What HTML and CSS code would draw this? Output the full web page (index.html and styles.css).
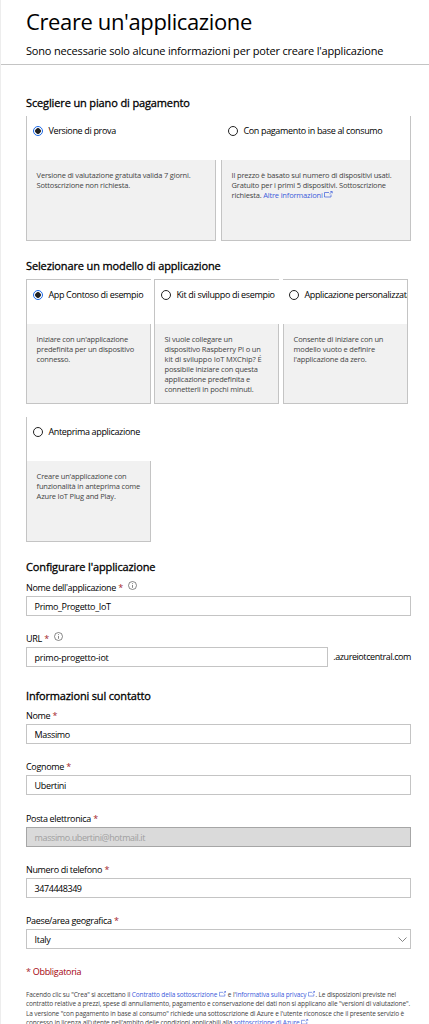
FILE: index.html
```html
<!DOCTYPE html>
<html lang="it">
<head>
<meta charset="utf-8">
<title>Creare un'applicazione</title>
<link rel="stylesheet" href="styles.css">
</head>
<body>
<svg width="0" height="0" class="defs">
  <symbol id="ext" viewBox="0 0 9 7"><path d="M5 1.5H.5v4.500h6.500V3.500M5.500 2.800 8 .8M6.300 .5h2v1.800" /></symbol>
  <symbol id="info" viewBox="0 0 9 9"><circle cx="4.5" cy="4.5" r="4" /><path d="M4.5 4v2.8M4.5 2.2v.9" /></symbol>
</svg>
<div class="page">
  <header class="header">
    <h1>Creare un'applicazione</h1>
    <p>Sono necessarie solo alcune informazioni per poter creare l'applicazione</p>
  </header>
  <main class="main">
    <h2 class="h-plan">Scegliere un piano di pagamento</h2>
    <div class="cards plans">
      <div class="card">
        <div class="head edge-l"><span class="radio on"></span>Versione di prova</div>
        <div class="body">Versione di valutazione gratuita valida 7 giorni.<br>Sottoscrizione non richiesta.</div>
      </div>
      <div class="card">
        <div class="head edge-r"><span class="radio"></span>Con pagamento in base al consumo</div>
        <div class="body">Il prezzo è basato sul numero di dispositivi usati.<br>Gratuito per i primi 5 dispositivi. Sottoscrizione<br>richiesta. <a>Altre informazioni<svg class="ext"><use href="#ext"/></svg></a></div>
      </div>
    </div>

    <h2 class="h-model">Selezionare un modello di applicazione</h2>
    <div class="cards models">
      <div class="card">
        <div class="head edge-t edge-l"><span class="radio on"></span>App Contoso di esempio</div>
        <div class="body">Iniziare con un'applicazione<br>predefinita per un dispositivo<br>connesso.</div>
      </div>
      <div class="card">
        <div class="head edge-t edge-l"><span class="radio"></span>Kit di sviluppo di esempio</div>
        <div class="body">Si vuole collegare un<br>dispositivo Raspberry PI o un<br><span class="wide">kit di sviluppo IoT MXChip? É</span><br>possibile iniziare con questa<br>applicazione predefinita e<br>connetterli in pochi minuti.</div>
      </div>
      <div class="card">
        <div class="head edge-t edge-r"><span class="radio"></span>Applicazione personalizzata</div>
        <div class="body">Consente di iniziare con un<br>modello vuoto e definire<br>l'applicazione da zero.</div>
      </div>
      <div class="card">
        <div class="head edge-l"><span class="radio"></span>Anteprima applicazione</div>
        <div class="body">Creare un'applicazione con<br>funzionalità in anteprima come<br>Azure IoT Plug and Play.</div>
      </div>
    </div>

    <h2 class="h-config">Configurare l'applicazione</h2>
    <div class="field">
      <div class="label">Nome dell'applicazione <i>*</i><svg class="info"><use href="#info"/></svg></div>
      <div class="input">Primo_Progetto_IoT</div>
    </div>
    <div class="field">
      <div class="label">URL <i>*</i><svg class="info"><use href="#info"/></svg></div>
      <div class="url"><div class="input dash">primo-progetto-iot</div><span>.azureiotcentral.com</span></div>
    </div>

    <h2 class="h-contact">Informazioni sul contatto</h2>
    <div class="field"><div class="label">Nome <i>*</i></div><div class="input">Massimo</div></div>
    <div class="field"><div class="label">Cognome <i>*</i></div><div class="input">Ubertini</div></div>
    <div class="field"><div class="label">Posta elettronica <i>*</i></div><div class="input disabled">massimo.ubertini@hotmail.it</div></div>
    <div class="field"><div class="label">Numero di telefono <i>*</i></div><div class="input digits">3474448349</div></div>
    <div class="field"><div class="label">Paese/area geografica <i>*</i></div><div class="input select">Italy<svg class="chev" viewBox="0 0 9 5"><path d="M.5.5l4 4 4-4"/></svg></div></div>
    <p class="required"><i>*</i> Obbligatoria</p>
    <p class="legal">Facendo clic su "Crea" si accettano il <a>Contratto della sottoscrizione <svg class="ext"><use href="#ext"/></svg></a> e l'<a>Informativa sulla privacy <svg class="ext"><use href="#ext"/></svg></a>. Le disposizioni previste nel<br>contratto relative a prezzi, spese di annullamento, pagamento e conservazione dei dati non si applicano alle "versioni di valutazione".<br>La versione "con pagamento in base al consumo" richiede una sottoscrizione di Azure e l'utente riconosce che il presente servizio è<br>concesso in licenza all'utente nell'ambito delle condizioni applicabili alla <a>sottoscrizione di Azure <svg class="ext"><use href="#ext"/></svg></a></p>
  </main>
</div>
</body>
</html>
```
FILE: styles.css
```css
* { box-sizing: border-box; margin: 0; }
html, body { height: 1024px; overflow: hidden; background: #fff; }
body {
  font: 9px/12px "Open Sans", "Noto Sans", sans-serif;
  letter-spacing: -0.34px;
  color: #000;
  white-space: nowrap;
}
.defs { position: absolute; }
.page { height: 1024px; overflow: hidden; border-left: 1px solid #ededed; }
.header { height: 65px; border-bottom: 1px solid #c4c4c4; padding: 6px 0 0 25px; }
h1 { font-size: 22px; line-height: 30px; font-weight: 400; letter-spacing: -0.38px; }
.header p { font-size: 11px; line-height: 16px; margin-top: 7px; letter-spacing: -0.18px; }
.main { width: 410px; padding: 30px 0 0 25px; }

h2 {
  font-size: 11px;
  line-height: 16px;
  font-weight: 500;
  letter-spacing: -0.13px;
  -webkit-text-stroke: 0.3px #000;
}
.h-plan { margin-bottom: 5px; }
.h-model { margin: 17px 0 5px; }
.h-config { margin: 17px 0 4px; }
.h-contact { margin: 6px 0 3px; letter-spacing: -0.16px; }

.cards { display: grid; }
.plans { grid-template-columns: 190px 190px; column-gap: 5px; }
.models { grid-template-columns: 128px 129px 125px; row-gap: 13px; }
.models .card { width: 125px; }
.card { height: 125px; display: flex; flex-direction: column; overflow: hidden; }
.head {
  height: 44px;
  flex: none;
  display: flex;
  align-items: center;
  padding: 0 0 14px 7px;
  border: 0 solid #c4c4c4;
}
.edge-l { border-left-width: 1px; padding-left: 6px; }
.edge-r { border-right-width: 1px; overflow: hidden; }
.models .edge-r { padding-left: 6px; }
.edge-t { border-top-width: 1px; height: 45px; }
.radio {
  flex: none;
  width: 10px;
  height: 10px;
  margin-right: 5.4px;
  border: 1px solid #222;
  border-radius: 50%;
}
.radio.on { border-color: #1a68e8; background: radial-gradient(circle, #222 2.5px, #fff 3.1px); }
.body {
  flex: 1;
  background: #f1f1f1;
  border: 1px solid #c4c4c4;
  border-top: 0;
  padding: 10px 0 0 9.6px;
  font-size: 7.5px;
  line-height: 10px;
  letter-spacing: -0.18px;
  color: #444;
}
.wide { letter-spacing: -0.07px; }
a { color: #3b5bdb; }
svg { fill: none; stroke: currentColor; }
.ext { width: 9px; height: 7px; stroke-width: 0.7; margin-left: 1px; }

.field { height: 51.4px; display: flex; flex-direction: column; }
.label { height: 17px; flex: none; padding-top: 3px; display: flex; align-items: flex-start; }
i { font-style: normal; color: #a4262c; margin-left: 2.4px; }
.info { width: 9px; height: 9px; color: #555; stroke-width: 0.7; margin: -1px 0 0 5px; }
.input {
  height: 20px;
  flex: none;
  border: 1px solid #c4c4c4;
  padding: 0 7.6px;
  line-height: 19px;
}
.dash { letter-spacing: -0.24px; }
.digits { letter-spacing: -0.45px; }
.url { display: flex; align-items: center; justify-content: space-between; }
.url .input { width: 302px; }
.url span { letter-spacing: -0.42px; }
.input.disabled { background: #dadada; border-color: #a6a6a6; color: #a0a0a0; letter-spacing: -0.4px; }
.input.select { display: flex; justify-content: space-between; padding-right: 3px; align-items: center; }
.chev { width: 9px; height: 5px; color: #666; stroke-width: 0.8; }
.required { color: #a4000c; margin-top: 2px; letter-spacing: -0.29px; }
.required i { margin: 0; }
.legal { font-size: 6.5px; line-height: 9.2px; letter-spacing: -0.13px; color: #444; margin-top: 12.4px; }
.legal .ext { width: 7.5px; height: 6px; margin: 0; }
```
